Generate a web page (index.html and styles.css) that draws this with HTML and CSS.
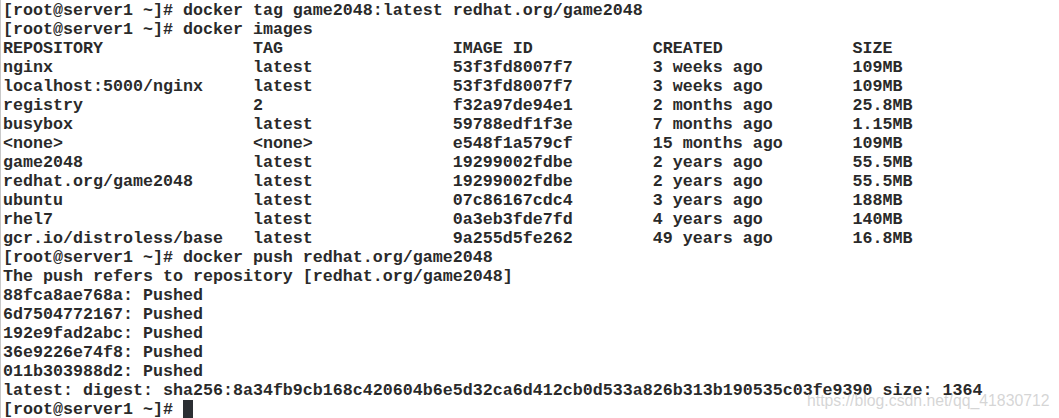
FILE: index.html
```html
<!DOCTYPE html>
<html>
<head>
<meta charset="utf-8">
<link rel="stylesheet" href="styles.css">
</head>
<body>
<div class="term"><pre class="out">[root@server1 ~]# docker tag game2048:latest redhat.org/game2048
[root@server1 ~]# docker images
REPOSITORY               TAG                 IMAGE ID            CREATED             SIZE
nginx                    latest              53f3fd8007f7        3 weeks ago         109MB
localhost:5000/nginx     latest              53f3fd8007f7        3 weeks ago         109MB
registry                 2                   f32a97de94e1        2 months ago        25.8MB
busybox                  latest              59788edf1f3e        7 months ago        1.15MB
&lt;none&gt;                   &lt;none&gt;              e548f1a579cf        15 months ago       109MB
game2048                 latest              19299002fdbe        2 years ago         55.5MB
redhat.org/game2048      latest              19299002fdbe        2 years ago         55.5MB
ubuntu                   latest              07c86167cdc4        3 years ago         188MB
rhel7                    latest              0a3eb3fde7fd        4 years ago         140MB
gcr.io/distroless/base   latest              9a255d5fe262        49 years ago        16.8MB
[root@server1 ~]# docker push redhat.org/game2048
The push refers to repository [redhat.org/game2048]
88fca8ae768a: Pushed
6d7504772167: Pushed
192e9fad2abc: Pushed
36e9226e74f8: Pushed
011b303988d2: Pushed
latest: digest: sha256:8a34fb9cb168c420604b6e5d32ca6d412cb0d533a826b313b190535c03fe9390 size: 1364
[root@server1 ~]# <span class="cursor"></span></pre><div class="watermark">https://blog.csdn.net/qq_41830712</div></div>
</body>
</html>
```

FILE: styles.css
```css
html, body {
  margin: 0;
  padding: 0;
  background: #ffffff;
}
.term {
  position: relative;
  width: 1059px;
  height: 418px;
  overflow: hidden;
  border-left: 1px solid #c8c8c8;
  box-sizing: border-box;
}
.out {
  margin: 0;
  padding: 1px 0 0 2px;
  font-family: "Liberation Mono", "Courier New", monospace;
  font-weight: bold;
  font-size: 16.67px;
  line-height: 19px;
  color: #2a2a2a;
  white-space: pre;
}
.cursor {
  display: inline-block;
  width: 10px;
  height: 18px;
  background: #2b2f33;
  vertical-align: -4px;
}
.watermark {
  position: absolute;
  left: 806px;
  top: 392px;
  font-family: Arial, "Liberation Sans", sans-serif;
  font-size: 17px;
  line-height: 17px;
  color: rgba(200, 200, 200, 0.75);
  white-space: nowrap;
  transform: scaleX(0.93);
  transform-origin: left top;
}
```
